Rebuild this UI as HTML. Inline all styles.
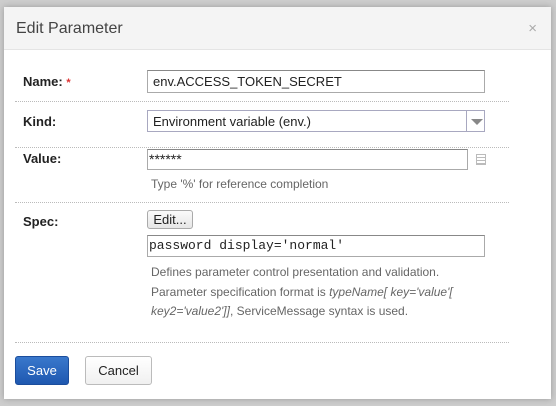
<!DOCTYPE html>
<html><head><style>
*{box-sizing:border-box;margin:0;padding:0}
body{width:556px;height:406px;background:#cdcdcd;position:relative;overflow:hidden;font-family:"Liberation Sans",Arial,sans-serif;font-size:13px;color:#222}
.dlg{position:absolute;left:4px;top:7px;width:547px;height:392px;background:#fff;box-shadow:0 0 6px rgba(0,0,0,.25)}
.hd{position:absolute;left:0;top:0;right:0;height:43px;background:#f4f4f4;border-bottom:1px solid #e4e4e4}
.hd .t{position:absolute;left:12px;top:13px;font-size:16px;color:#444}
.hd .x{position:absolute;right:14px;top:13px;font-size:15px;color:#aaa}
.a{position:absolute}
.lbl{font-weight:bold;font-size:13px;color:#222}
.inp{border:1px solid #aaa;border-top-color:#888;background:#fff;font-size:13px;padding:2px 5px}
.sep{height:0;border-top:1px dotted #bbb;left:11px;width:494px}
.help{color:#666;font-size:12px;line-height:19.5px}
</style></head><body>
<div class="dlg">
<div class="hd"><span class="t">Edit Parameter</span><span class="x">×</span></div>
<div class="a lbl" style="left:19px;top:67px">Name: <span style="color:#d33;font-size:11px">*</span></div>
<div class="a inp" style="left:143px;top:63px;width:338px;height:23px;padding-top:3px">env.ACCESS_TOKEN_SECRET</div>
<div class="a sep" style="top:94px"></div>
<div class="a lbl" style="left:19px;top:107px">Kind:</div>
<div class="a inp" style="left:143px;top:103px;width:338px;height:22px;border-color:#a8a8c0;padding-top:3px">Environment variable (env.)</div>
<div class="a" style="left:462px;top:104px;width:1px;height:20px;background:#a8a8c0"></div>
<div class="a" style="left:467px;top:112px;width:0;height:0;border-left:6px solid transparent;border-right:6px solid transparent;border-top:6px solid #888"></div>
<div class="a sep" style="top:140px"></div>
<div class="a lbl" style="left:19px;top:144px">Value:</div>
<div class="a inp" style="left:143px;top:142px;width:321px;height:21px;font-size:14px;padding:2px 1px;line-height:15px">******</div>
<div class="a" style="left:472px;top:147px;width:10px;height:11px;border:1px solid #bbb;background:repeating-linear-gradient(#fff 0 2px,#bbb 2px 3px)"></div>
<div class="a help" style="left:147px;top:168px">Type '%' for reference completion</div>
<div class="a sep" style="top:195px"></div>
<div class="a lbl" style="left:19px;top:207px">Spec:</div>
<div class="a" style="left:143px;top:203px;width:46px;height:19px;border:1px solid #aaa;border-radius:3px;background:linear-gradient(#fafafa,#e6e6e6);font-size:13px;text-align:center;line-height:17px">Edit...</div>
<div class="a inp" style="left:143px;top:228px;width:338px;height:22px;font-family:'Liberation Mono',monospace;font-size:13px;padding:2px 1px">password display='normal'</div>
<div class="a help" style="left:147px;top:256px;width:340px">Defines parameter control presentation and validation.<br>Parameter specification format is <i>typeName[ key='value'[ key2='value2']]</i>, ServiceMessage syntax is used.</div>
<div class="a sep" style="top:335px"></div>
<div class="a" style="left:11px;top:349px;width:54px;height:29px;border-radius:3px;background:linear-gradient(#3a78cc,#1f58b0);border:1px solid #1b4d9c;color:#fff;font-size:13px;text-align:center;line-height:27px">Save</div>
<div class="a" style="left:81px;top:349px;width:67px;height:29px;border-radius:3px;background:linear-gradient(#fff,#f0f0f0);border:1px solid #bbb;font-size:13px;text-align:center;line-height:27px">Cancel</div>
</div>
</body></html>
